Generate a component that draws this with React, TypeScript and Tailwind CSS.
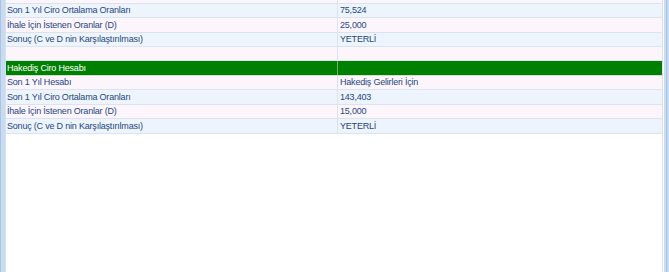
import React from "react";

type Row = { a: string; b: string; h: number; bg: string; green?: boolean };

const BLUE = "bg-[#eef4fc]";
const PINK = "bg-[#fcf5fc]";

const rows: Row[] = [
  { a: "", b: "", h: 15, bg: PINK },
  { a: "Son 1 Yıl Ciro Ortalama Oranları", b: "75,524", h: 14, bg: BLUE },
  { a: "İhale İçin İstenen Oranlar (D)", b: "25,000", h: 15, bg: PINK },
  { a: "Sonuç (C ve D nin Karşılaştırılması)", b: "YETERLİ", h: 14, bg: BLUE },
  { a: "", b: "", h: 14, bg: PINK },
  { a: "Hakediş Ciro Hesabı", b: "", h: 15, bg: "bg-[#008000]", green: true },
  { a: "Son 1 Yıl Hesabı", b: "Hakediş Gelirleri İçin", h: 14, bg: PINK },
  { a: "Son 1 Yıl Ciro Ortalama Oranları", b: "143,403", h: 15, bg: BLUE },
  { a: "İhale İçin İstenen Oranlar (D)", b: "15,000", h: 14, bg: PINK },
  { a: "Sonuç (C ve D nin Karşılaştırılması)", b: "YETERLİ", h: 15, bg: BLUE },
];

export default function App() {
  return (
    <div
      className="w-[669px] h-[272px] bg-white flex overflow-hidden"
      style={{ fontFamily: '"Liberation Sans", Arial, sans-serif' }}
    >
      <div className="w-[5px] flex shrink-0">
        <div className="w-[1px] bg-[#a9c3e6]" />
        <div className="w-[4px] bg-[#c9dbf1]" />
      </div>
      <div className="flex-1 border-l border-r border-[#d6e1f0] overflow-hidden">
        <div className="-mt-[11px] flex flex-col">
          {rows.map((r, i) => (
            <div
              key={i}
              className={`flex border-b ${r.green ? "border-[#cfe0cf]" : "border-[#d9e3f1]"} ${r.bg}`}
              style={{ height: r.h }}
            >
              <div
                className={`w-[332px] shrink-0 border-r ${r.green ? "border-[#6fae6f] text-white" : "border-[#d9e3f1] text-[#25477f]"} pl-[1px] flex items-center pt-[1px] text-[9px] tracking-[-0.2px] whitespace-nowrap`}
              >
                {r.a}
              </div>
              <div
                className={`flex-1 pl-[2px] flex items-center pt-[1px] text-[9px] tracking-[-0.2px] whitespace-nowrap ${r.green ? "text-white" : "text-[#25477f]"}`}
              >
                {r.b}
              </div>
            </div>
          ))}
        </div>
      </div>
      <div className="w-[6px] flex shrink-0">
        <div className="w-[1px] bg-white" />
        <div className="w-[2px] bg-[#c9dbf1]" />
        <div className="w-[1px] bg-[#a9c3e6]" />
        <div className="w-[2px] bg-[#c9dbf1]" />
      </div>
    </div>
  );
}
